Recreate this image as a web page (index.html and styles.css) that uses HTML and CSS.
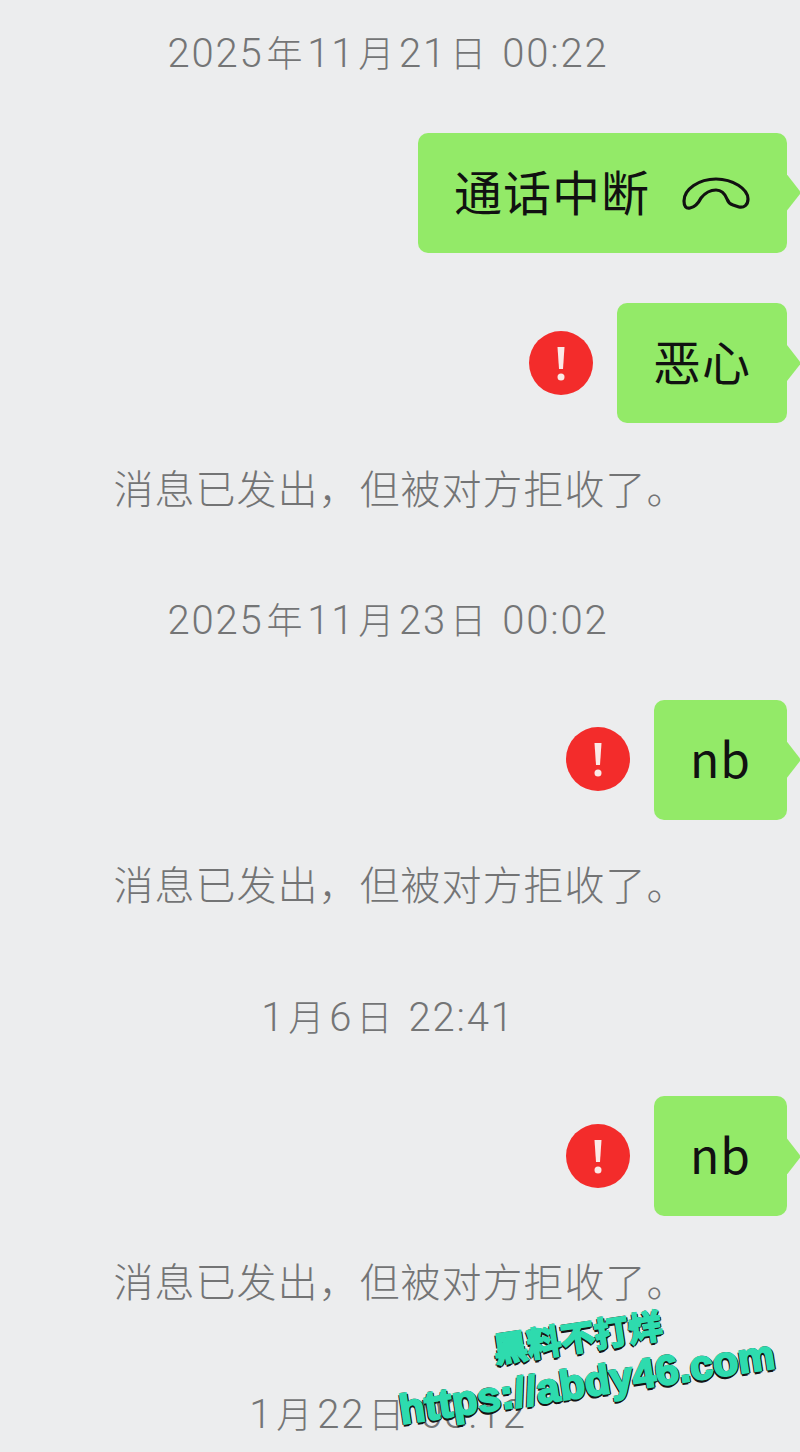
FILE: index.html
```html
<!DOCTYPE html>
<html lang="zh-CN">
<head>
  <meta charset="utf-8">
  <title>聊天记录</title>
  <link rel="stylesheet" href="styles.css">
</head>
<body>
  <div class="chat">
    <div class="time">2025<span class="cjk">年</span>11<span class="cjk">月</span>21<span class="cjk">日</span> 00:22</div>
    <div class="row">
      <div class="bubble">通话中断
        <svg class="phone" width="70" height="34" viewBox="0 0 70 34" fill="none" stroke="#111" stroke-width="3.2" stroke-linejoin="round">
          <path d="M3 25C3 13 18 3 35 3C52 3 67 13 67 23C67 29 63 32 58 31L52 29C49 28 47 26 46 23C44 18 40 14 35 14C29 14 24 17 20 22C17 28 14 31 9 32C5 33 3 30 3 25Z"/>
        </svg>
      </div>
    </div>
    <div class="row row-next">
      <svg class="alert" width="64" height="64" viewBox="0 0 64 64">
        <circle cx="32" cy="32" r="32" fill="#f32c2b"/>
        <path d="M28.5 16H35.5L34 38H30Z" fill="#fbe9e6"/>
        <circle cx="32" cy="46" r="3.5" fill="#fbe9e6"/>
      </svg>
      <div class="bubble">恶心</div>
    </div>
    <div class="notice">消息已发出，但被对方拒收了。</div>

    <div class="time time-next">2025<span class="cjk">年</span>11<span class="cjk">月</span>23<span class="cjk">日</span> 00:02</div>
    <div class="row">
      <svg class="alert" width="64" height="64" viewBox="0 0 64 64">
        <circle cx="32" cy="32" r="32" fill="#f32c2b"/>
        <path d="M28.5 16H35.5L34 38H30Z" fill="#fbe9e6"/>
        <circle cx="32" cy="46" r="3.5" fill="#fbe9e6"/>
      </svg>
      <div class="bubble">nb</div>
    </div>
    <div class="notice">消息已发出，但被对方拒收了。</div>

    <div class="time time-next">1<span class="cjk">月</span>6<span class="cjk">日</span> 22:41</div>
    <div class="row">
      <svg class="alert" width="64" height="64" viewBox="0 0 64 64">
        <circle cx="32" cy="32" r="32" fill="#f32c2b"/>
        <path d="M28.5 16H35.5L34 38H30Z" fill="#fbe9e6"/>
        <circle cx="32" cy="46" r="3.5" fill="#fbe9e6"/>
      </svg>
      <div class="bubble">nb</div>
    </div>
    <div class="notice">消息已发出，但被对方拒收了。</div>

    <div class="time time-next">1<span class="cjk">月</span>22<span class="cjk">日</span> 03:12</div>
  </div>

  <div class="stamp">
    <div class="stamp-title">黑料不打烊</div>
    <div class="stamp-url">https://abdy46.com</div>
  </div>
</body>
</html>
```

FILE: styles.css
```css
html, body {
  margin: 0;
  height: 1452px;
  overflow: hidden;
  background: #ecedee;
}
body {
  position: relative;
  font-family: "Noto Sans CJK SC", sans-serif;
}
.chat {
  padding-top: 24px;
}
.time {
  height: 60px;
  line-height: 54px;
  padding-right: 24px;
  margin-bottom: 48.6px;
  text-align: center;
  font-family: Roboto, "Noto Sans CJK SC", sans-serif;
  font-weight: 300;
  font-size: 40px;
  letter-spacing: 1.8px;
  color: #747576;
  white-space: pre;
}
.time .cjk {
  font-family: "Noto Sans CJK SC", sans-serif;
  font-size: 36px;
  margin: 0 3px;
}
.time-next {
  margin-top: 71.6px;
}
.row {
  display: flex;
  justify-content: flex-end;
  align-items: center;
  gap: 24px;
  padding-right: 13px;
}
.row-next {
  margin-top: 50.5px;
}
.bubble {
  position: relative;
  display: flex;
  align-items: center;
  gap: 31px;
  height: 120px;
  box-sizing: border-box;
  padding: 0 36px 6px 36px;
  background: #93ea68;
  border-radius: 10px;
  font-size: 48px;
  letter-spacing: 1px;
  color: #111;
  white-space: nowrap;
}
.phone {
  margin-top: 6px;
}
.bubble::after {
  content: "";
  position: absolute;
  right: -14px;
  top: 42px;
  width: 14px;
  height: 36px;
  background: #93ea68;
  clip-path: polygon(0 0, 100% 50%, 0 100%);
}
.alert {
  flex: none;
  margin-top: -1px;
}
.notice {
  height: 60px;
  line-height: 54px;
  margin-top: 36.5px;
  padding-left: 1px;
  text-align: center;
  font-size: 40px;
  font-weight: 300;
  letter-spacing: 1px;
  color: #737475;
}
.stamp {
  position: absolute;
  left: 394px;
  top: 1314px;
  width: 400px;
  transform: rotate(-8.5deg);
  font-family: "Liberation Sans", "Noto Sans CJK SC", sans-serif;
  font-weight: 700;
  color: #2edbae;
  -webkit-text-stroke: 2px #2edbae;
  text-shadow: -1px 3px 0 #141414, 1px 2px 0 #141414, -2px 1px 0 #141414, 2px 1px 0 #141414, 0 -1px 0 #141414;
  white-space: nowrap;
}
.stamp-title {
  font-size: 34px;
  line-height: 44px;
  padding-left: 102px;
}
.stamp-url {
  font-size: 41.6px;
  line-height: 46px;
}
```
